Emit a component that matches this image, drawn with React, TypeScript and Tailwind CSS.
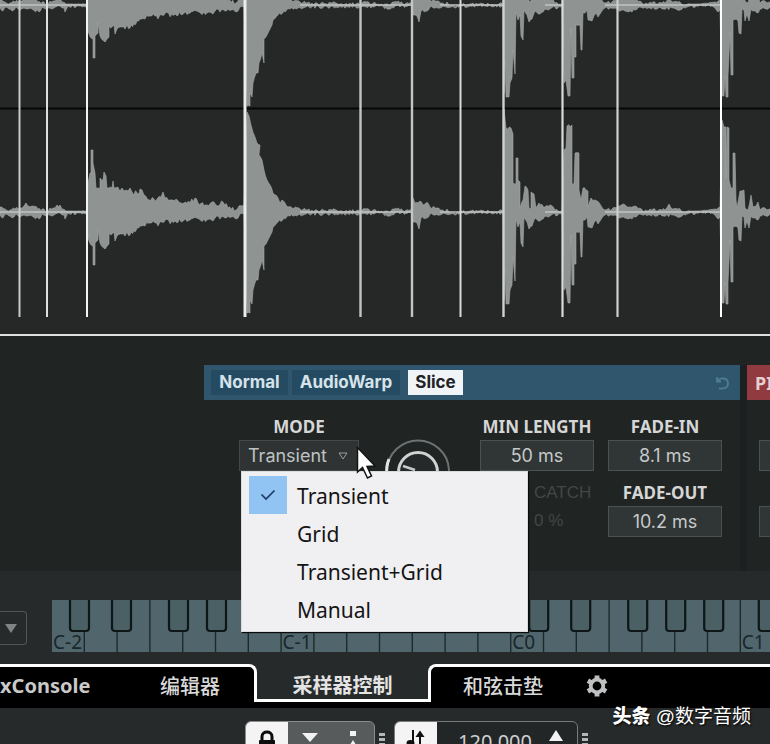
const WAVE_TOP =
  "0,207 5,209 10,210 20,208 24,206 26,203 28,206 33,206 38,209 47,211 53,208 57,205 60,205 62,209 66,211 87,211 88,183 90,173 91,173 91,150 93,150 93,163 95,173 96,188 100,188 100,178 103,180 104,172 106,176 107,188 112,188 113,181 114,188 118,187 119,190 122,188 124,191 126,190 128,191 130,188 132,192 139,194 140,189 142,190 144,195 149,200 157,199 161,197 163,192 165,198 170,200 176,199 184,203 190,203 195,198 198,203 207,205 212,202 217,206 223,202 228,208 236,210 242,206 244,205 247,112 249,116 251,125 255,137 257,143 260,145 259,155 262,160 264,170 267,180 270,185 273,193 278,198 280,203 282,200 285,203 288,207 300,209 306,210 318,211 332,210 340,211 356,211 363,209 380,212 386,211 389,213 394,209 412,211 413,198 415,203 420,201 423,205 428,203 430,207 437,208 442,210 445,212 447,209 451,213 470,211 503,211 504,109 506,128 511,128 513,134 513,183 516,184 516,158 518,158 518,180 520,182 520,208 523,200 525,186 528,190 529,208 531,209 531,192 534,194 536,208 539,203 545,207 550,205 555,210 562,211 564,150 566,148 567,126 572,125 572,184 574,184 575,153 579,153 579,190 581,200 583,188 586,190 588,191 588,207 591,198 595,200 600,204 605,210 612,209 618,206 623,204 630,207 635,206 640,208 644,212 650,209 665,210 669,204 671,208 678,209 683,212 690,211 700,211 715,209 720,207 722,120 724,127 726,127 726,178 727,127 729,128 729,180 731,188 733,188 733,153 735,153 736,200 737,208 740,191 744,190 745,208 748,210 751,195 753,207 756,206 758,202 760,210 765,208 770,209";

const WAVE_BOTTOM =
  "770,214 766,216 760,216 757,220 751,216 749,228 747,221 745,228 744,217 742,216 741,241 739,240 738,228 733,227 733,282 731,282 730,240 728,283 728,304 726,304 725,283 724,303 722,303 720,217 718,219 712,213 690,213 687,214 680,217 672,215 662,216 650,215 640,214 632,219 625,218 618,217 610,215 605,215 600,221 598,224 596,220 592,228 588,227 587,217 583,220 582,257 581,257 580,232 576,232 576,264 574,264 574,285 572,285 571,235 570,303 568,303 566,287 564,290 562,213 550,216 545,216 540,221 535,218 532,226 529,229 527,222 524,217 523,247 521,243 520,222 518,227 516,219 515,281 513,257 512,285 510,290 509,304 506,304 505,268 504,300 503,213 470,213 451,214 440,215 430,214 427,218 421,218 419,229 417,223 413,222 412,213 395,213 389,216 380,213 360,214 306,214 290,216 284,218 278,222 273,227 272,232 268,240 264,246 264,270 262,260 259,270 258,280 256,280 253,290 252,304 250,300 250,313 247,313 244,214 240,214 238,218 225,218 215,218 213,221 210,219 190,220 175,221 162,222 158,226 155,223 150,223 145,226 137,228 134,231 131,232 130,235 127,232 125,236 122,234 117,236 115,241 114,232 109,233 109,244 105,249 100,243 98,229 98,240 95,243 95,265 93,265 93,246 91,245 88,238 87,213 68,213 65,219 64,215 60,213 52,216 42,214 39,219 32,216 24,215 20,217 16,214 12,218 6,214 3,218 0,215";

const SLICES = [
  { x: 19.5, w: 2, color: "#c9c9c9" },
  { x: 47, w: 2, color: "#dedede" },
  { x: 87, w: 2, color: "#f3f3f3" },
  { x: 245, w: 3, color: "#ececee" },
  { x: 360.5, w: 2.4, color: "#c3c5c5" },
  { x: 412, w: 2.4, color: "#c3c5c5" },
  { x: 460.5, w: 2, color: "#dadada" },
  { x: 503.5, w: 2.4, color: "#d0d0d0" },
  { x: 562.5, w: 2.2, color: "#dadada" },
  { x: 617.5, w: 2.2, color: "#cfcfcf" },
  { x: 721, w: 2, color: "#ffffff" },
];

const MODES = ["Transient", "Grid", "Transient+Grid", "Manual"];

// Flat runs between the hits, drawn brighter than the body of the wave.
const QUIET = [
  [0, 87],
  [300, 412],
  [440, 503],
  [545, 562],
  [605, 721],
];

function noise(n: number) {
  const v = Math.sin(n * 12.9898) * 43758.5453;
  return v - Math.floor(v) - 0.5;
}

// Adds small teeth along the long, flat stretches of an envelope.
function roughen(points: string) {
  const pts = points.split(" ").map((p) => p.split(",").map(Number));
  const out: string[] = [];
  pts.forEach(([x, y], i) => {
    out.push(`${x},${y}`);
    const next = pts[i + 1];
    if (!next) return;
    const steps = Math.floor(Math.abs(next[0] - x) / 1.5);
    const calm = (x >= 66 && x < 87) || x > 688 && x < 712;
    for (let s = 1; s < steps; s++) {
      const px = x + ((next[0] - x) * s) / steps;
      const py = y + ((next[1] - y) * s) / steps;
      const amp = calm ? 0.5 : px > 90 && px < 240 ? 5 : 3;
      out.push(`${px.toFixed(1)},${(py + noise(px + y) * amp).toFixed(1)}`);
    }
  });
  return out.join(" ");
}

const OUTLINE = `${roughen(WAVE_TOP)} ${roughen(WAVE_BOTTOM)}`;

function Channel() {
  return (
    <g>
      <polygon points={OUTLINE} fill="#8f9392" stroke="#a5a9a8" strokeWidth="0.6" />
      {QUIET.map(([from, to]) => (
        <path key={from} d={`M${from} 212H${to}`} stroke="#c0c3c2" strokeWidth="1.5" />
      ))}
    </g>
  );
}

function Waveform() {
  return (
    <svg
      viewBox="0 0 770 334"
      preserveAspectRatio="none"
      className="block h-[334px] w-full bg-[#252827]"
    >
      <path d="M0 108.5H770" stroke="#050606" strokeWidth="2" />
      <Channel />
      <g transform="translate(0 -207)">
        <Channel />
      </g>
      {SLICES.map((s) => (
        <path key={s.x} d={`M${s.x} 0V317`} stroke={s.color} strokeWidth={s.w} />
      ))}
    </svg>
  );
}

function Field({ id, label, value }: { id: string; label: string; value: string }) {
  return (
    <div className="flex w-[114px] flex-col items-center">
      <label
        htmlFor={id}
        className="font-['Noto_Sans'] text-[17px] leading-6 font-bold whitespace-nowrap text-[#d6d6d6]"
      >
        {label}
      </label>
      <input
        id={id}
        defaultValue={value}
        className="mt-px h-[31px] w-full border border-[#4b5152] bg-[#303536] text-center font-['Inter'] text-lg text-[#c6c9ca]"
      />
    </div>
  );
}

function Knob() {
  return (
    <svg viewBox="0 0 68 68" className="h-[68px] w-[68px]" fill="none">
      <path d="M10 52A31 31 0 1 1 58 52" stroke="#6d7374" strokeWidth="2" />
      <path d="M10 52A31 31 0 0 1 5 20" stroke="#e4e4e4" strokeWidth="3" />
      <circle cx="34" cy="33" r="19.5" fill="#25292a" stroke="#d2d2d2" strokeWidth="3" />
      <path d="M31 31L19 27" stroke="#c9c9c9" strokeWidth="2.5" />
    </svg>
  );
}

function CheckMark() {
  return (
    <svg viewBox="0 0 16 12" className="h-3 w-4" fill="none" stroke="#1c3c66" strokeWidth="1.7">
      <path d="M1.5 5.5L6 10L14.5 1.5" />
    </svg>
  );
}

function ModeMenu() {
  return (
    <div
      role="menu"
      className="absolute top-[31px] left-[2px] z-10 w-[287px] border border-[#d9dcde] bg-[#f0eff2] pt-1 pb-[3px] shadow-[1px_1px_1px_#0a0c0c]"
    >
      {MODES.map((mode, i) => (
        <button
          key={mode}
          role="menuitemradio"
          aria-checked={i === 0}
          className="flex h-[38px] w-full items-center pl-[7px] text-left font-['Noto_Sans'] text-[21px] text-[#141414]"
        >
          <span
            className={
              i === 0
                ? "flex h-[38px] w-[38px] items-center justify-center bg-[#91c4f2]"
                : "h-[38px] w-[38px]"
            }
          >
            {i === 0 && <CheckMark />}
          </span>
          <span className="pt-[3px] pl-[10px]">{mode}</span>
        </button>
      ))}
    </div>
  );
}

function Cursor() {
  return (
    <svg viewBox="0 0 22 34" className="absolute top-[6px] left-[117px] z-20 h-[34px] w-[22px]">
      <path
        d="M1.5 1.5V26L6.5 21.5L11.5 32L15.5 30L11 20.5L19 20Z"
        fill="#fff"
        stroke="#151515"
        strokeWidth="1.5"
      />
    </svg>
  );
}

function Sampler() {
  return (
    <section className="flex h-[235px] bg-[#202423] pt-[29px]">
      <div className="w-[204px] shrink-0" />
      <div className="min-w-0 flex-1">
        <div className="flex h-[35px] items-center gap-1 bg-[#30566e] pr-2 pl-[7px] font-['Inter'] text-[17px] font-bold">
          <button className="h-[25px] w-[77px] bg-[#244b62] text-[#d7e3ea]">Normal</button>
          <button className="h-[25px] w-[108px] bg-[#244b62] text-[#d7e3ea]">AudioWarp</button>
          <button className="ml-1 h-[25px] w-[55px] bg-[#f1f4f7] text-[#1e2224]">Slice</button>
          <button aria-label="Reset" className="ml-auto">
            <svg viewBox="0 0 18 18" className="size-[18px]" fill="none" stroke="#4f7c95" strokeWidth="1.8">
              <path d="M3 3V7.5H7M3.5 7C6 3.5 14 3 14 9.5C14 13.5 10.5 15 5 14.5" />
            </svg>
          </button>
        </div>
        <div className="relative flex pt-[15px] pl-[35px]">
          <div className="flex w-[120px] flex-col items-center">
            <span className="font-['Noto_Sans'] text-[17px] leading-6 font-bold text-[#d6d6d6]">
              MODE
            </span>
            <div className="relative mt-px w-full">
              <button className="flex h-[31px] w-full items-center border border-[#43494a] bg-[#2f3334] pl-2 font-['Inter'] text-lg text-[#bfc2c3]">
                <span className="w-[90px] text-left">Transient</span>
                <svg viewBox="0 0 10 8" className="h-2 w-[10px]" fill="none" stroke="#9a9d9e">
                  <path d="M1 1H9L5 7Z" />
                </svg>
              </button>
              <ModeMenu />
              <Cursor />
            </div>
          </div>
          <div className="w-[121px] pt-6 pl-[25px]">
            <Knob />
          </div>
          <div className="flex flex-col gap-[10px]">
            <Field id="min-length" label="MIN LENGTH" value="50 ms" />
            <div className="flex flex-col pl-[54px] text-[17px] text-[#444746]">
              <label htmlFor="catch" className="leading-6">
                CATCH
              </label>
              <input id="catch" disabled defaultValue="0 %" className="mt-1 h-6 w-14" />
            </div>
          </div>
          <div className="ml-[14px] flex flex-col gap-[10px]">
            <Field id="fade-in" label="FADE-IN" value="8.1 ms" />
            <Field id="fade-out" label="FADE-OUT" value="10.2 ms" />
          </div>
        </div>
      </div>
      <div className="w-[7px] shrink-0 bg-[#1d2020]" />
      <div className="w-[23px] shrink-0 overflow-hidden">
        <div className="flex h-[35px] items-center bg-[#913a40] pl-2 font-['Noto_Sans'] text-lg font-bold whitespace-nowrap text-[#e6cfd0]">
          PITCH
        </div>
        <div className="mt-10 ml-3 h-[31px] w-14 border border-[#4b5152] bg-[#303536]" />
        <div className="mt-[35px] ml-3 h-[31px] w-14 border border-[#4b5152] bg-[#303536]" />
      </div>
    </section>
  );
}

const KEY = 32.8;
const BLACK_OFFSETS = [17, 59, 116, 154, 192];

function Keyboard() {
  const octaves = ["C-2", "C-1", "C0", "C1"];
  return (
    <section className="flex h-[93px] overflow-hidden bg-[#272a2a] pt-[29px]">
      <div className="w-[52px] shrink-0 pt-[11px]">
        <button
          aria-label="Keyboard range"
          className="flex h-[34px] w-[27px] items-center justify-start rounded-r-sm border border-l-0 border-[#515556] pl-[5px]"
        >
          <svg viewBox="0 0 12 9" className="h-[9px] w-3">
            <path d="M0 0H12L6 9Z" fill="#808485" />
          </svg>
        </button>
      </div>
      <svg width="920" height="52" className="shrink-0">
        <rect width="920" height="52" fill="#50666c" />
        {Array.from({ length: 27 }, (_, i) => (
          <path key={i} d={`M${(i + 1) * KEY - 0.5} 0V52`} stroke="#1d2a2d" strokeWidth="1.4" />
        ))}
        {octaves.map((name, o) => (
          <g key={name} transform={`translate(${o * KEY * 7} 0)`}>
            {BLACK_OFFSETS.map((x) => (
              <path
                key={x}
                d={`M${x + 1} 0V28Q${x + 1} 31 ${x + 4} 31H${x + 17}Q${x + 20} 31 ${x + 20} 28V0`}
                fill="#4a6064"
                stroke="#0e1617"
                strokeWidth="2.2"
              />
            ))}
            <text x="1" y="49" fontSize="19" fill="#18272b" className="font-['Noto_Sans']">
              {name}
            </text>
          </g>
        ))}
      </svg>
    </section>
  );
}

function Tabs() {
  const tab = "pt-1 text-xl leading-6 font-medium whitespace-nowrap text-[#d9d9d9]";
  return (
    <nav className="bg-black pb-[6px]">
      <div className="flex h-[38px] bg-[#272a2a]">
        <div className="flex w-[257px] shrink-0 items-center rounded-tr-lg border-t-3 border-r-3 border-white bg-black">
          <button className="w-[160px] pt-[2px] text-left font-['Noto_Sans'] text-xl leading-6 font-bold whitespace-nowrap text-[#c9c9c9]">
            xConsole
          </button>
          <button className={tab}>编辑器</button>
        </div>
        <button className="w-[171px] shrink-0 border-b-3 border-white pt-[9px] text-xl leading-6 font-bold text-[#e4e4e4]">
          采样器控制
        </button>
        <div className="flex min-w-0 flex-1 items-center rounded-tl-lg border-t-3 border-l-3 border-white bg-black pl-8">
          <button className={tab}>和弦击垫</button>
          <button aria-label="Settings" className="mt-[3px] ml-[43px]">
            <svg viewBox="0 0 22 22" className="size-[22px]" fill="none" stroke="#bfc0c2">
              <circle cx="11" cy="11" r="6.3" strokeWidth="3.8" />
              <path
                d="M11 0.5V4M11 18V21.5M1.9 5.7L5 7.5M17 14.5L20.1 16.3M1.9 16.3L5 14.5M17 7.5L20.1 5.7"
                strokeWidth="4.8"
              />
            </svg>
          </button>
        </div>
      </div>
    </nav>
  );
}

function Grip() {
  return (
    <svg viewBox="0 0 6 16" className="mt-3 h-4 w-[6px]" fill="#b4b6b7">
      <path d="M0 0H6V3H0ZM0 5H6V8H0ZM0 10H6V13H0Z" />
    </svg>
  );
}

function Transport() {
  return (
    <footer className="flex h-9 items-start overflow-hidden bg-[#272a2a] pt-[13px] pl-[245px]">
      <div className="flex h-10 shrink-0 overflow-hidden rounded-t-md border border-[#8a8c8d] bg-[#585b5c]">
        <button aria-label="Lock" className="flex w-[42px] justify-center bg-[#f4f4f5] pt-2">
          <svg viewBox="0 0 18 24" className="h-6 w-[18px]">
            <path d="M4 11V6.5C4 0.5 14 0.5 14 6.5V11" fill="none" stroke="#0d0d0d" strokeWidth="3" />
            <rect x="1" y="10" width="16" height="13" rx="1" fill="#0d0d0d" />
          </svg>
        </button>
        <button aria-label="Options" className="flex w-[86px] pt-2 pl-[14px]">
          <svg viewBox="0 0 60 20" className="h-5 w-[60px]" fill="#f2f2f2">
            <path d="M0 3H16L8 12ZM48 1H54V6H48ZM51 10L54 15H48Z" />
          </svg>
        </button>
      </div>
      <div className="w-[19px] shrink-0 pl-1">
        <Grip />
      </div>
      <div className="flex h-10 w-[184px] shrink-0 overflow-hidden rounded-t-md border border-[#77797a] bg-[#232627]">
        <button aria-label="Tempo sync" className="flex w-[42px] justify-center bg-[#f4f4f5] pt-2">
          <svg viewBox="0 0 20 20" className="size-5" fill="none" stroke="#111" strokeWidth="2">
            <path d="M7 0V13M14 20V3" />
            <path d="M14 0.5L18.5 7H9.5Z" fill="#111" stroke="none" />
            <ellipse cx="4.5" cy="13" rx="3" ry="2" fill="#111" />
          </svg>
        </button>
        <input
          aria-label="Tempo"
          defaultValue="120.000"
          className="mt-[6px] h-7 w-[100px] pl-[21px] font-['Noto_Sans'] text-xl text-[#cfd0d1]"
        />
        <svg viewBox="0 0 14 11" className="mt-2 ml-3 h-[11px] w-[14px]">
          <path d="M7 0L14 11H0Z" fill="#f2f2f2" />
        </svg>
      </div>
      <div className="shrink-0 pl-1">
        <Grip />
      </div>
    </footer>
  );
}

export default function App() {
  return (
    <div className="relative min-h-screen overflow-hidden bg-[#272a2a] font-['Liberation_Sans','Noto_Sans_CJK_SC',sans-serif]">
      <Waveform />
      <div className="h-[2px] bg-[#dfe2e1]" />
      <Sampler />
      <Keyboard />
      <Tabs />
      <Transport />
      <p className="absolute right-[19px] bottom-[11px] text-[19px] leading-8 text-white [text-shadow:1px_1px_2px_#000]">
        <span className="font-black">头条</span> @数字音频
      </p>
    </div>
  );
}
